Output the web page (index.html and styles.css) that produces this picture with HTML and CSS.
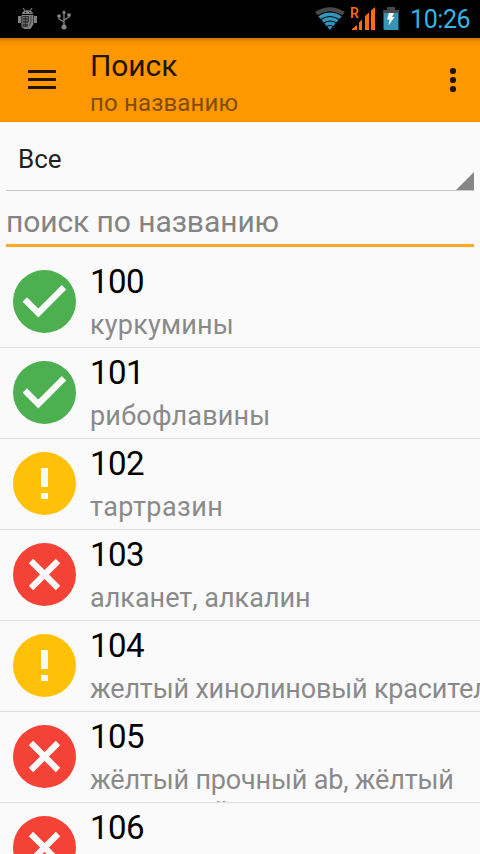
FILE: index.html
```html
<!DOCTYPE html>
<html lang="ru">
<head>
<meta charset="utf-8">
<title>Поиск</title>
<link rel="stylesheet" href="styles.css">
</head>
<body>
<svg class="defs" width="0" height="0">
  <symbol id="ok" viewBox="0 0 63 63"><circle cx="31.5" cy="31.5" r="31.5" fill="#4caf50"/><path d="M11.800 29.500 25.300 43 51 17.200" fill="none" stroke="#fafafa" stroke-width="6.2"/></symbol>
  <symbol id="warn" viewBox="0 0 63 63"><circle cx="31.5" cy="31.5" r="31.5" fill="#ffc107"/><path d="M28 16h7v19h-7zM28 41h7v6h-7z" fill="#fafafa"/></symbol>
  <symbol id="bad" viewBox="0 0 63 63"><circle cx="31.5" cy="31.5" r="31.5" fill="#f44336"/><path d="M18 18 45 45M45 18 18 45" fill="none" stroke="#fafafa" stroke-width="6.2"/></symbol>
</svg>
<div class="screen">
  <div class="status">
    <svg class="droid" width="20" height="22" viewBox="0 0 20 22"><path d="M5 0l2 3M14 0l-2 3" stroke="#777" stroke-width="1.2"/><path d="M4 6C4 1 15 1 15 6zM3.500 7h12v9l-3 5H6.500L3.500 19zM0 8h3v7H0zM16 8h3v7h-3z" fill="#808080"/><path d="M4.500 8H11v5l-1 2v4H4.500z" fill="#333"/><path d="M6 9v9M9 9v9" stroke="#888" stroke-width="1.300" stroke-dasharray="1.300 1.500"/><path d="M7 4.500h1M11.500 4.500h1" stroke="#000" stroke-width="1.2"/><path d="M13 8v6l-2 4" stroke="#444" fill="none"/></svg>
    <svg class="usb" width="14" height="20" viewBox="0 0 14 20"><path d="M7 2v15M7 12 2 9V6M7 10l5-3V4" fill="none" stroke="#888" stroke-width="1.3"/><path d="M7 0 4.8 3.5h4.4zM10.3 3.5h3.4v3h-3.4z" fill="#888"/><circle cx="2" cy="6" r="1.8" fill="#888"/><circle cx="7" cy="17" r="2.5" fill="#888"/></svg>
    <svg class="signals" width="86" height="26" viewBox="314 6 86 26">
      <path d="M315 12Q330 2.500 345 12L342 15.500Q330 8 318 15.500z" fill="#484848"/>
      <path d="M318 16Q330 8 342 16L330 30z" fill="#3094bd"/>
      <path d="M317 16.500Q330 7.500 343 16.500M320 20Q330 13 340 20M323 23.500Q330 18.500 337 23.500M326 27Q330 24 334 27" fill="none" stroke="#000" stroke-width="1.200"/>
      <path d="M352 30v-1l5-4v5zM359 30v-7.500l3-3V30zM365 30V16l4-3.500V30zM371 30V10.500l4-3.500V30z" fill="#ff6d0a"/>
      <path d="M387.500 7h7v3h4v20h-15V10h4z" fill="#3794b7"/><path d="M387.500 7h7v3h4v3h-15v-3h4z" fill="#484848"/>
      <path d="M389 13h5l-2 4h2.500l-6 8.500 1-6H387z" fill="#fff"/>
    </svg>
    <span class="roam">R</span>
    <span class="clock">10:26</span>
  </div>
  <header class="bar">
    <svg class="menu" width="28" height="20" viewBox="0 0 28 20"><path d="M0 1.500h28M0 9.500h28M0 17.500h28" stroke="#211400" stroke-width="2.800"/></svg>
    <div class="titles"><h1 class="title">Поиск</h1><div class="subtitle">по названию</div></div>
    <svg class="more" width="8" height="26" viewBox="0 0 8 26"><g fill="#211400"><circle cx="4" cy="4" r="3.100"/><circle cx="4" cy="13" r="3.100"/><circle cx="4" cy="22" r="3.100"/></g></svg>
  </header>
  <div class="spinner"><span class="all">Все</span><svg class="corner" width="18" height="18" viewBox="0 0 18 18"><path d="M18 0v18H0z" fill="#868686"/></svg></div>
  <div class="search"><span class="hint">поиск по названию</span></div>
  <main class="list">
    <div class="row"><svg class="icon"><use href="#ok"/></svg><div class="text"><div class="code">100</div><div class="name">куркумины</div></div></div>
    <div class="row"><svg class="icon"><use href="#ok"/></svg><div class="text"><div class="code">101</div><div class="name">рибофлавины</div></div></div>
    <div class="row"><svg class="icon"><use href="#warn"/></svg><div class="text"><div class="code">102</div><div class="name loose">тартразин</div></div></div>
    <div class="row"><svg class="icon"><use href="#bad"/></svg><div class="text"><div class="code">103</div><div class="name even">алканет, алкалин</div></div></div>
    <div class="row"><svg class="icon"><use href="#warn"/></svg><div class="text"><div class="code">104</div><div class="name tight">желтый хинолиновый краситель</div></div></div>
    <div class="row"><svg class="icon"><use href="#bad"/></svg><div class="text"><div class="code">105</div><div class="name tight">жёлтый прочный ab, жёлтый<br>кислотный</div></div></div>
    <div class="row"><svg class="icon"><use href="#bad"/></svg><div class="text"><div class="code">106</div></div></div>
  </main>
</div>
</body>
</html>
```
FILE: styles.css
```css
* { box-sizing: border-box; }
body { margin: 0; background: #fafafa; font-family: Roboto, "Noto Sans", sans-serif; }
svg { display: block; flex: none; }
.defs { position: absolute; }
.screen { width: 480px; height: 854px; overflow: hidden; display: flex; flex-direction: column; }
.status { height: 38px; flex: none; background: #000; display: flex; align-items: flex-start; position: relative; }
.droid { margin: 8px 0 0 18px; }
.usb { margin: 10px 0 0 19px; }
.signals { margin: 6px 0 0 243px; }
.roam { position: absolute; left: 350px; top: 6px; font-size: 14px; line-height: 14px; font-weight: 500; color: #ff6d0a; }
.clock { margin-left: 10px; font-size: 25px; line-height: 39px; letter-spacing: -.4px; color: #33b5e5; white-space: nowrap; }
.bar { height: 84px; flex: none; display: flex; background: linear-gradient(#c97800, #f39200 4px, #ff9800 11px); }
.menu { margin: 32px 0 0 28px; }
.titles { margin-left: 34px; flex: 1; white-space: nowrap; }
.title { margin: 10px 0 0; font-size: 30px; line-height: 36px; font-weight: 400; letter-spacing: -.1px; color: #211400; }
.subtitle { margin-top: 4px; font-size: 24px; line-height: 30px; letter-spacing: .15px; color: #7f4c00; }
.more { margin: 29px 23px 0 0; }
.spinner { height: 69px; flex: none; margin: 0 6px; display: flex; justify-content: space-between; align-items: flex-end; border-bottom: 1px solid #c8c8c8; }
.all { margin: 0 0 15px 12px; font-size: 26px; line-height: 32px; color: #212121; }
.search { height: 56px; flex: none; margin: 0 6px; border-bottom: 3px solid #ffa726; }
.hint { display: block; padding-top: 13px; font-size: 30px; line-height: 36px; letter-spacing: -.08px; color: #848484; white-space: nowrap; }
.list { padding-top: 10px; }
.row { height: 91px; display: flex; overflow: hidden; border-bottom: 1px solid #dedede; }
.icon { width: 63px; height: 63px; margin: 13px 0 0 13px; }
.text { margin-left: 14px; white-space: nowrap; }
.code { margin-top: 5px; font-size: 33px; line-height: 40px; letter-spacing: -.6px; color: #000; }
.name { margin-top: 7px; font-size: 27px; line-height: 32px; letter-spacing: .2px; color: #8a8a8a; }
.loose { letter-spacing: .45px; }
.even { letter-spacing: 0; }
.tight { letter-spacing: -.17px; }
```
